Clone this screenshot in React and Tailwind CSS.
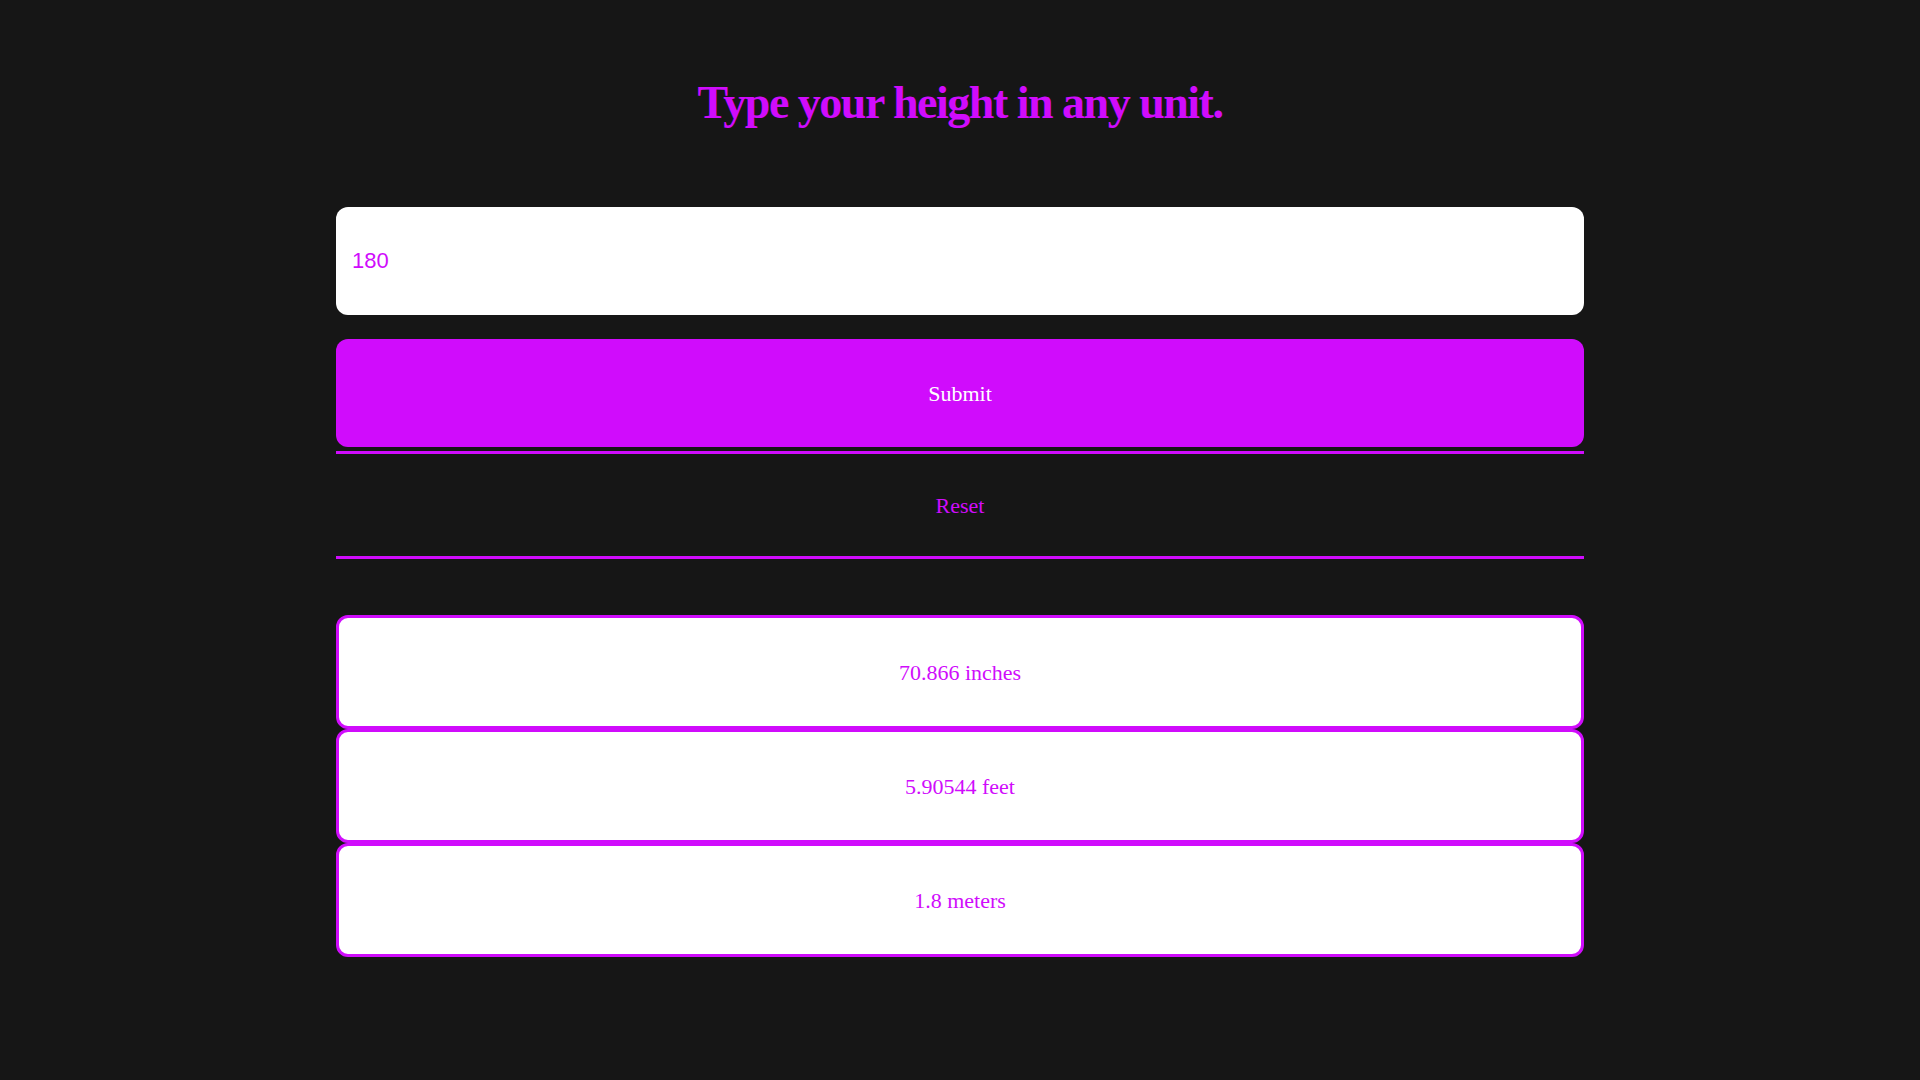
import React from "react";

const serif = "font-['Liberation_Serif','DejaVu_Serif',serif]";

export default function App() {
  const results = ["70.866 inches", "5.90544 feet", "1.8 meters"];
  return (
    <div className="min-h-screen bg-[#161616] pt-[80px] pb-[120px]">
      <h1
        className={`${serif} text-center text-[46px] leading-[46px] font-bold tracking-[-1.5px] text-[#d00cfc]`}
      >
        Type your height in any unit.
      </h1>
      <div className="mx-auto mt-[81px] flex w-[1248px] flex-col">
        <input
          readOnly
          value="180"
          className="h-[108px] rounded-[12px] bg-white px-4 font-['Liberation_Sans',Arial,sans-serif] text-[22px] text-[#d00cfc] outline-none"
        />
        <button
          className={`${serif} mt-6 h-[108px] rounded-[12px] bg-[#d00cfc] text-[22px] text-white`}
        >
          Submit
        </button>
        <button
          className={`${serif} mt-1 h-[108px] border-y-[3px] border-[#d00cfc] bg-transparent text-[22px] text-[#d00cfc]`}
        >
          Reset
        </button>
        <div className="mt-[56px] flex flex-col">
          {results.map((r) => (
            <div
              key={r}
              className={`${serif} flex h-[114px] items-center justify-center rounded-[12px] border-[3px] border-[#d00cfc] bg-white text-[22px] text-[#d00cfc]`}
            >
              {r}
            </div>
          ))}
        </div>
      </div>
    </div>
  );
}
